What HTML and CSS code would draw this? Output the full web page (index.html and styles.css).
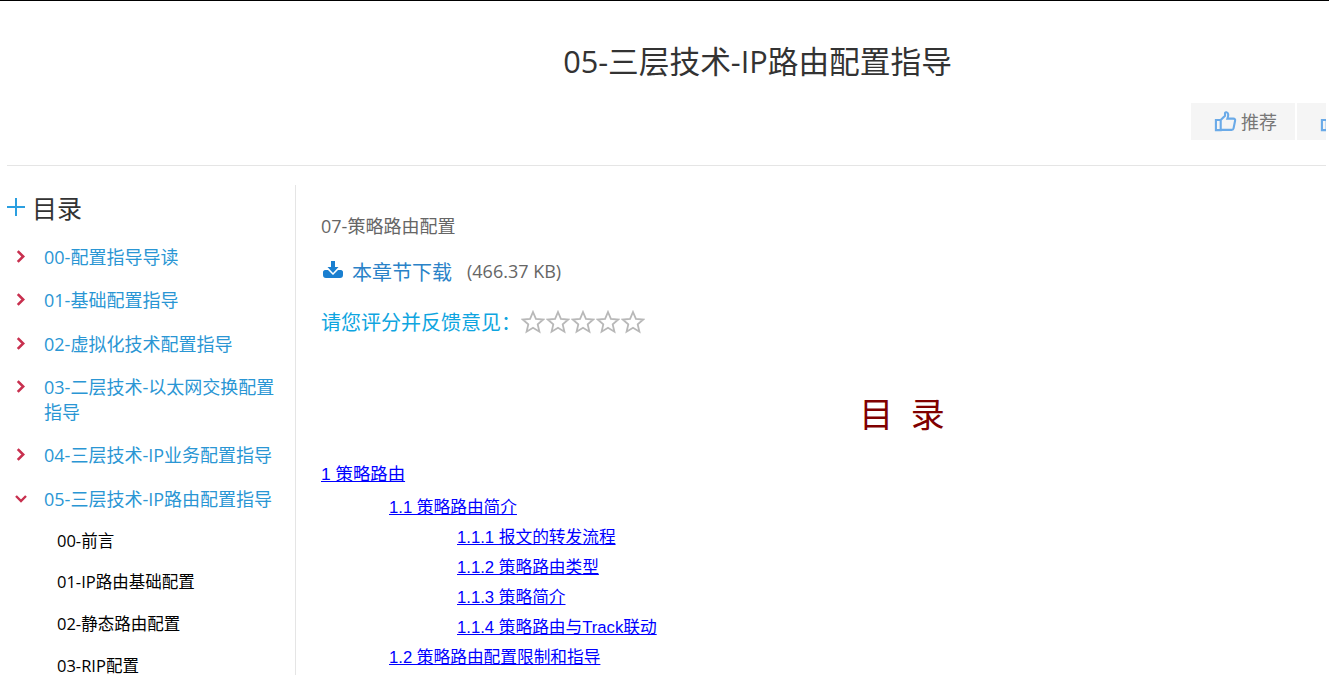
FILE: index.html
```html
<!DOCTYPE html>
<html lang="zh-CN">
<head>
    <meta charset="UTF-8">
    <title>05-三层技术-IP路由配置指导</title>
    <link rel="stylesheet" href="styles.css">
</head>
<body>

<div class="page">
<div class="page-inner">
    <!-- 标题 -->
    <div class="header">
        <h1>05-三层技术-IP路由配置指导</h1>
        <div class="actions">
            <a class="action-btn" href="#">
                <svg class="thumb" viewBox="0 0 24 24"><path d="M7 10.500 11.500 6V3.200c0-1.200 2.900-1.300 3.300 1.200.2 1.400-.3 3.300-.8 4.600h6.300c1.200 0 2 1 1.700 2.200l-1.600 8c-.2 1-1 1.500-2 1.500H7zM2 10.500h5v10.500H2z"/></svg>
                <span>推荐</span>
            </a>
            <a class="action-btn" href="#">
                <svg class="thumb" viewBox="0 0 24 24"><path d="M7 10.500 11.500 6V3.200c0-1.200 2.900-1.300 3.300 1.200.2 1.400-.3 3.300-.8 4.600h6.300c1.200 0 2 1 1.700 2.200l-1.600 8c-.2 1-1 1.500-2 1.500H7zM2 10.500h5v10.500H2z"/></svg>
            </a>
        </div>
    </div>

    <div class="content">
        <!-- 左侧目录 -->
        <div class="sidebar">
            <div class="side-title">
                <svg class="plus" viewBox="0 0 18 18"><path d="M9 0v18M0 9h18"/></svg>
                <span>目录</span>
            </div>
            <ul class="side-list">
                <li><svg class="chev" viewBox="0 0 10 12"><path d="M2 1l5 5-5 5"/></svg><a href="#">00-配置指导导读</a></li>
                <li><svg class="chev" viewBox="0 0 10 12"><path d="M2 1l5 5-5 5"/></svg><a href="#">01-基础配置指导</a></li>
                <li><svg class="chev" viewBox="0 0 10 12"><path d="M2 1l5 5-5 5"/></svg><a href="#">02-虚拟化技术配置指导</a></li>
                <li><svg class="chev" viewBox="0 0 10 12"><path d="M2 1l5 5-5 5"/></svg><a href="#">03-二层技术-以太网交换配置指导</a></li>
                <li><svg class="chev" viewBox="0 0 10 12"><path d="M2 1l5 5-5 5"/></svg><a href="#">04-三层技术-IP业务配置指导</a></li>
                <li><svg class="chev" viewBox="0 0 12 12"><path d="M1 3.500l5 5 5-5"/></svg><a href="#">05-三层技术-IP路由配置指导</a></li>
            </ul>
            <ul class="sub-list">
                <li><a href="#">00-前言</a></li>
                <li><a href="#">01-IP路由基础配置</a></li>
                <li><a href="#">02-静态路由配置</a></li>
                <li><a href="#">03-RIP配置</a></li>
            </ul>
        </div>

        <!-- 正文 -->
        <div class="main">
            <div class="chapter">07-策略路由配置</div>
            <div class="download">
                <svg class="dl-icon" viewBox="0 0 20 17"><path d="M8 0h4v6h3.500L10 12 4.500 6H8zM0 11c0-1 1-2 2-2h3l5 5 5-5h3c1 0 2 1 2 2v3c0 2-1 3-3 3H3c-2 0-3-1-3-3z"/></svg>
                <a href="#">本章节下载</a>
                <span class="size">(466.37 KB)</span>
            </div>
            <div class="rating">
                <span>请您评分并反馈意见：</span>
                <div class="stars">
                    <svg class="star" viewBox="0 0 24 24"><path d="M12 2l2.900 6.900 7.400.6-5.600 4.900 1.700 7.300L12 17.800l-6.400 3.900 1.700-7.300-5.600-4.900 7.400-.6z"/></svg>
                    <svg class="star" viewBox="0 0 24 24"><path d="M12 2l2.900 6.900 7.400.6-5.600 4.900 1.700 7.300L12 17.800l-6.400 3.900 1.700-7.300-5.600-4.900 7.400-.6z"/></svg>
                    <svg class="star" viewBox="0 0 24 24"><path d="M12 2l2.900 6.900 7.400.6-5.600 4.900 1.700 7.300L12 17.800l-6.400 3.900 1.700-7.300-5.600-4.900 7.400-.6z"/></svg>
                    <svg class="star" viewBox="0 0 24 24"><path d="M12 2l2.900 6.900 7.400.6-5.600 4.900 1.700 7.300L12 17.800l-6.400 3.900 1.700-7.300-5.600-4.900 7.400-.6z"/></svg>
                    <svg class="star" viewBox="0 0 24 24"><path d="M12 2l2.900 6.900 7.400.6-5.600 4.900 1.700 7.300L12 17.800l-6.400 3.900 1.700-7.300-5.600-4.900 7.400-.6z"/></svg>
                </div>
            </div>

            <h2 class="toc-title">目&nbsp;&nbsp;录</h2>
            <div class="toc">
                <p class="toc1"><a href="#">1 策略路由</a></p>
                <p class="toc2"><a href="#">1.1 策略路由简介</a></p>
                <p class="toc3"><a href="#">1.1.1 报文的转发流程</a></p>
                <p class="toc3"><a href="#">1.1.2 策略路由类型</a></p>
                <p class="toc3"><a href="#">1.1.3 策略简介</a></p>
                <p class="toc3"><a href="#">1.1.4 策略路由与Track联动</a></p>
                <p class="toc2"><a href="#">1.2 策略路由配置限制和指导</a></p>
            </div>
        </div>
    </div>
</div>
</div>

</body>
</html>
```

FILE: styles.css
```css
/* 页面 */
html {
    height: 100%;
    overflow: hidden;
}

body {
    margin: 0;
    height: 100%;
    overflow: hidden;
    border-top: 1px solid #000;
    background-color: #fff;
    font-family: "Open Sans", "Noto Sans CJK SC", sans-serif;
}

a {
    text-decoration: none;
}

.page {
    width: 1319px;
    margin-left: 7px;
    overflow: hidden;
}

.page-inner {
    width: 1501px;
}

/* 标题 */
.header {
    height: 164px;
    border-bottom: 1px solid #e5e5e5;
}

.header h1 {
    margin: 0;
    padding-top: 40px;
    height: 62px;
    text-align: center;
    font-size: 30.700px;
    line-height: 41px;
    font-weight: normal;
    color: #333;
}

.actions {
    display: flex;
    justify-content: flex-end;
    gap: 2px;
    padding-right: 107px;
}

.action-btn {
    display: flex;
    align-items: center;
    gap: 4px;
    width: 104px;
    height: 37px;
    box-sizing: border-box;
    padding-left: 23px;
    background-color: #f5f5f5;
    font-size: 18px;
    line-height: 34px;
    color: #777;
}

.thumb {
    width: 23px;
    height: 23px;
    flex-shrink: 0;
    fill: none;
    stroke: #6aaae8;
    stroke-width: 2.200;
}

/* 左右两栏 */
.content {
    display: flex;
    margin-top: 19px;
}

.sidebar {
    width: 288px;
    height: 600px;
    flex-shrink: 0;
    border-right: 1px solid #e5e5e5;
}

.side-title {
    display: flex;
    align-items: center;
    gap: 7px;
    height: 44px;
    margin-bottom: 7px;
    font-size: 25px;
    color: #333;
}

.plus {
    width: 18px;
    height: 18px;
    fill: none;
    stroke: #2b9fe0;
    stroke-width: 2;
}

.side-list {
    list-style: none;
    margin: 0;
    padding: 0;
}

.side-list li {
    position: relative;
    padding: 9px 20px 9px 37px;
    font-size: 18px;
    line-height: 25.250px;
}

.side-list a {
    color: #2a96d4;
}

.chev {
    position: absolute;
    left: 8px;
    top: 14px;
    width: 12px;
    height: 13px;
    fill: none;
    stroke: #c8304f;
    stroke-width: 2.400;
}

.sub-list {
    list-style: none;
    margin: -1px 0 0;
    padding: 0 0 0 50px;
}

.sub-list li {
    height: 41.700px;
    font-size: 16.500px;
    line-height: 41.700px;
}

.sub-list a {
    color: #000;
}

/* 正文 */
.main {
    flex: 1;
    padding: 23px 25px 0;
}

.chapter {
    font-size: 18px;
    line-height: 36px;
    color: #666;
}

.download {
    display: flex;
    align-items: center;
    height: 36px;
    margin-top: 9px;
    font-size: 20px;
    color: #2a82c8;
}

.download a {
    color: #2a82c8;
}

.dl-icon {
    width: 20px;
    height: 17px;
    margin: -3px 9px 0 2px;
    fill: #1a7fd0;
}

.size {
    margin-left: 15px;
    font-size: 18px;
    color: #666;
}

.rating {
    display: flex;
    align-items: center;
    height: 36px;
    margin-top: 14px;
    font-size: 20px;
    color: #0ea5e0;
}

.stars {
    display: flex;
    gap: 1px;
    margin-top: 2px;
}

.star {
    width: 24px;
    height: 24px;
    fill: none;
    stroke: #b8b8b8;
    stroke-width: 1.800;
}

.toc-title {
    margin: 51px 0 0;
    text-align: center;
    font-size: 34px;
    line-height: 48px;
    font-weight: normal;
    color: #800000;
}

/* 目录链接 */
.toc {
    margin-top: 21px;
    font-family: "Liberation Sans", "Noto Sans CJK SC", sans-serif;
}

.toc p {
    margin: 0;
}

.toc a {
    color: #00f;
    text-decoration: underline;
}

.toc1 {
    font-size: 17.400px;
    line-height: 30px;
    margin-bottom: 4px !important;
}

.toc2 {
    padding-left: 68px;
    font-size: 16.700px;
    line-height: 30px;
}

.toc3 {
    padding-left: 136px;
    font-size: 16.700px;
    line-height: 30px;
}
```
